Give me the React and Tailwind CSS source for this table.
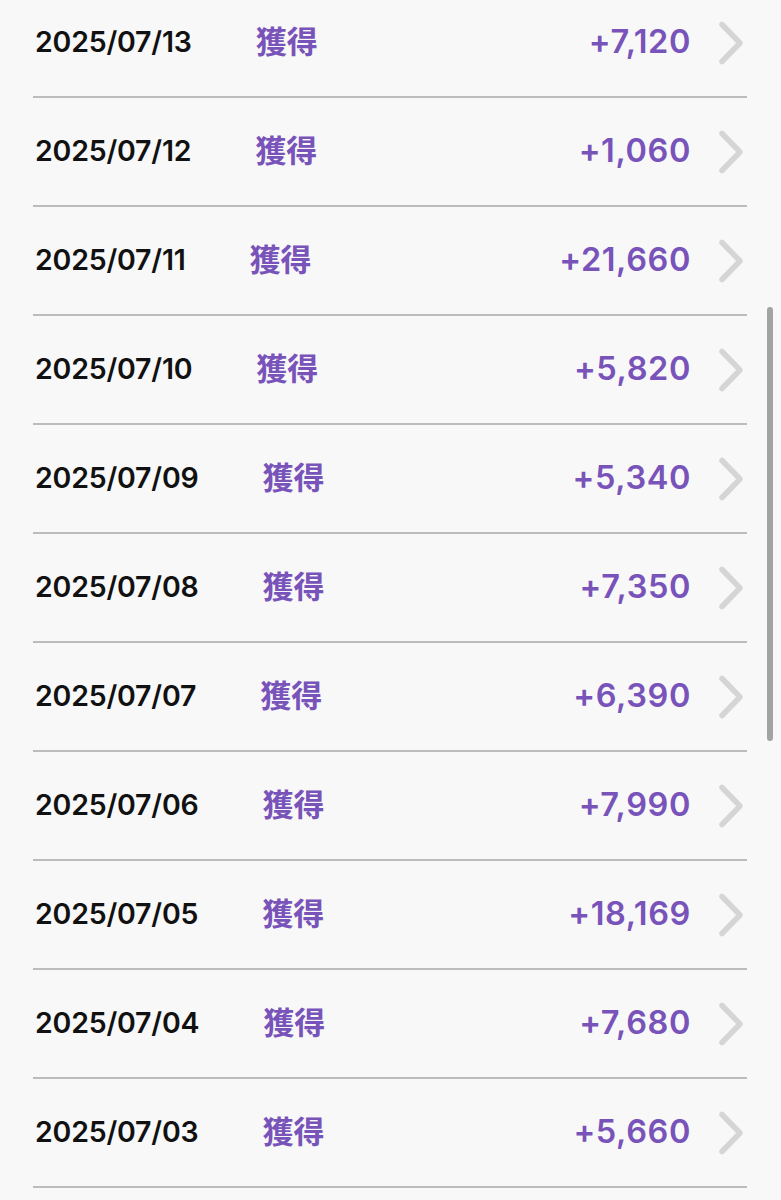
import React from 'react'

const rows = [
  { date: '2025/07/13', amount: '+7,120' },
  { date: '2025/07/12', amount: '+1,060' },
  { date: '2025/07/11', amount: '+21,660' },
  { date: '2025/07/10', amount: '+5,820' },
  { date: '2025/07/09', amount: '+5,340' },
  { date: '2025/07/08', amount: '+7,350' },
  { date: '2025/07/07', amount: '+6,390' },
  { date: '2025/07/06', amount: '+7,990' },
  { date: '2025/07/05', amount: '+18,169' },
  { date: '2025/07/04', amount: '+7,680' },
  { date: '2025/07/03', amount: '+5,660' },
]

function Chevron() {
  return (
    <svg width="28" height="46" viewBox="0 0 28 46" className="shrink-0">
      <path
        d="M5 4.5 L23 23 L5 41.5"
        fill="none"
        stroke="#d5d5d5"
        strokeWidth="5.5"
        strokeLinecap="round"
        strokeLinejoin="round"
      />
    </svg>
  )
}

function App() {
  return (
    <div
      className="relative w-full h-[1200px] overflow-hidden bg-[#f8f8f8]"
      style={{ fontFamily: 'Inter, "Noto Sans CJK JP", sans-serif' }}
    >
      <div className="ml-[33px] w-[714px] -mt-[11px]">
        {rows.map((r) => (
          <div
            key={r.date}
            className="flex items-center h-[109px] border-b-2 border-[#bcbcbc]"
          >
            <span className="pl-[2px] text-[28.5px] font-semibold text-[#111111] tracking-[-0.2px]">
              {r.date}
            </span>
            <span className="ml-[64px] text-[31px] font-bold text-[#7853b9]">獲得</span>
            <span className="ml-auto text-[32.5px] font-semibold text-[#7853b9] tracking-[0.6px]">
              {r.amount}
            </span>
            <span className="ml-[26px] mr-[2px]">
              <Chevron />
            </span>
          </div>
        ))}
      </div>
      <div className="absolute right-[8px] top-[307px] w-[6px] h-[434px] rounded-full bg-[#a3a3a3]" />
    </div>
  )
}

export default App
